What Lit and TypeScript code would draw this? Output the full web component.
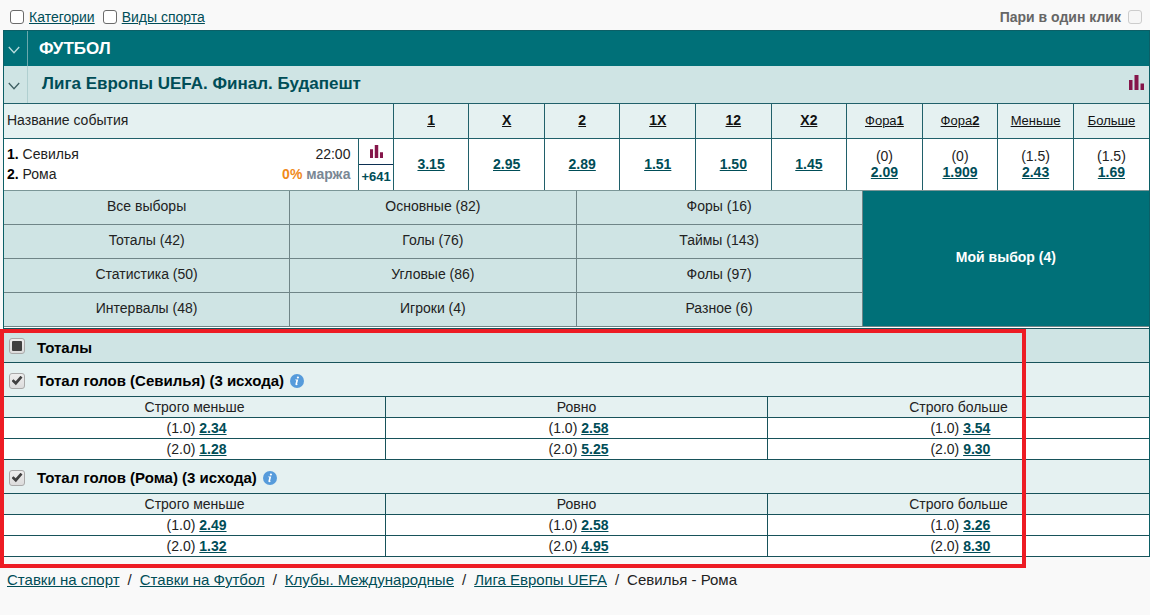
import { LitElement, html, css, svg } from "lit";
import { customElement, property } from "lit/decorators.js";
import { classMap } from "lit/directives/class-map.js";

interface Outcome {
  handicap: string;
  price: string;
}

interface Market {
  id: string;
  title: string;
  rows: [Outcome, Outcome, Outcome][];
}

const o = (handicap: string, price: string): Outcome => ({ handicap, price });

const COLUMNS = [
  { text: "", mark: "1" },
  { text: "", mark: "X" },
  { text: "", mark: "2" },
  { text: "", mark: "1X" },
  { text: "", mark: "12" },
  { text: "", mark: "X2" },
  { text: "Фора", mark: "1" },
  { text: "Фора", mark: "2" },
  { text: "Меньше", mark: "" },
  { text: "Больше", mark: "" },
];

const ODDS: Outcome[] = [
  o("", "3.15"),
  o("", "2.95"),
  o("", "2.89"),
  o("", "1.51"),
  o("", "1.50"),
  o("", "1.45"),
  o("(0)", "2.09"),
  o("(0)", "1.909"),
  o("(1.5)", "2.43"),
  o("(1.5)", "1.69"),
];

const GROUPS = [
  "Все выборы",
  "Основные (82)",
  "Форы (16)",
  "Тоталы (42)",
  "Голы (76)",
  "Таймы (143)",
  "Статистика (50)",
  "Угловые (86)",
  "Фолы (97)",
  "Интервалы (48)",
  "Игроки (4)",
  "Разное (6)",
];

const OUTCOMES = ["Строго меньше", "Ровно", "Строго больше"];

const MARKETS: Market[] = [
  {
    id: "sevilla",
    title: "Тотал голов (Севилья) (3 исхода)",
    rows: [
      [o("(1.0)", "2.34"), o("(1.0)", "2.58"), o("(1.0)", "3.54")],
      [o("(2.0)", "1.28"), o("(2.0)", "5.25"), o("(2.0)", "9.30")],
    ],
  },
  {
    id: "roma",
    title: "Тотал голов (Рома) (3 исхода)",
    rows: [
      [o("(1.0)", "2.49"), o("(1.0)", "2.58"), o("(1.0)", "3.26")],
      [o("(2.0)", "1.32"), o("(2.0)", "4.95"), o("(2.0)", "8.30")],
    ],
  },
];

const CRUMBS = ["Ставки на спорт", "Ставки на Футбол", "Клубы. Международные", "Лига Европы UEFA"];

const chevron = html`<svg width="12" height="8" viewBox="0 0 12 8" aria-hidden="true">
  ${svg`<path d="M0.8 1 L6 6.8 L11.2 1" fill="none" stroke="currentColor" stroke-width="1.3" />`}
</svg>`;

const bars = (size: number) => html`<svg width=${size} height=${size} viewBox="0 0 15 15" aria-hidden="true">
  ${svg`<path d="M0 5h3.5v10H0zM5.5 0h4v15h-4zM11.5 8.5H15V15h-3.5z" fill="#85164a" />`}
</svg>`;

const info = html`<svg width="14" height="14" viewBox="0 0 14 14" aria-hidden="true">
  ${svg`<circle cx="7" cy="7" r="7" fill="#569bdb" />
  <circle cx="7.9" cy="3.5" r="1.1" fill="#fff" />
  <path d="M5.3 5.6h2.9l-1.1 4.3q-.2.8.9.3l-.1.6q-2.9 1.2-2.5-.7l.9-3.6q0-.4-1.1-.4z" fill="#fff" />`}
</svg>`;

@customElement("market-table")
class MarketTable extends LitElement {
  @property({ attribute: false }) market!: Market;

  static styles = css`
    :host {
      display: block;
    }
    .title {
      display: flex;
      align-items: center;
      gap: 6px;
      height: 31px;
      padding: 2px 0 0 5px;
      background: #e5f1f1;
      color: #000;
    }
    h3 {
      margin: 0 0 0 6px;
      font-size: 15px;
      line-height: 20px;
    }
    .tick {
      appearance: none;
      display: grid;
      place-items: center;
      box-sizing: border-box;
      width: 16px;
      height: 16px;
      margin: 0;
      border: 1px solid #a9a9a9;
      border-radius: 3px;
      background: linear-gradient(#eee, #dcdcdc);
    }
    .tick:checked::before {
      content: "";
      width: 11px;
      height: 10px;
      background: #404040;
      clip-path: polygon(0 55%, 18% 38%, 38% 58%, 82% 3%, 100% 20%, 40% 98%);
    }
    .info {
      display: grid;
      padding: 0;
      border: 0;
      background: none;
    }
    table {
      width: 100%;
      table-layout: fixed;
      border-collapse: collapse;
      border-block: 1px solid #17525a;
    }
    th,
    td {
      height: 20px;
      padding: 0;
      text-align: center;
      font-weight: 400;
      line-height: 20px;
      border: 1px solid #17525a;
      background: #fff;
    }
    td {
      padding-left: 4px;
    }
    th {
      background: #e5f1f1;
    }
    th:first-child,
    td:first-child {
      border-left: 0;
    }
    th:last-child,
    td:last-child {
      border-right: 0;
    }
    .price {
      color: #004d57;
      font-weight: 700;
    }
  `;

  render() {
    const { id, title, rows } = this.market;
    return html`
      <div class="title">
        <input class="tick" type="checkbox" id=${id} checked />
        <h3><label for=${id}>${title}</label></h3>
        <button class="info" aria-label="Информация">${info}</button>
      </div>
      <table>
        <thead>
          <tr>
            ${OUTCOMES.map((name) => html`<th scope="col">${name}</th>`)}
          </tr>
        </thead>
        <tbody>
          ${rows.map(
            (row) => html`<tr>
              ${row.map((c) => html`<td>${c.handicap} <a class="price" href="#">${c.price}</a></td>`)}
            </tr>`
          )}
        </tbody>
      </table>
    `;
  }
}

@customElement("app-root")
class AppRoot extends LitElement {
  static styles = css`
    :host {
      display: block;
      min-height: 100vh;
      background: #f9f9f9;
      color: #222;
      font: 14px/20px "Liberation Sans", Arial, sans-serif;
    }
    a {
      color: #004d57;
    }
    .tools {
      display: flex;
      align-items: center;
      gap: 5px;
      height: 26px;
      padding: 4px 8px 0 10px;
    }
    .tools input {
      appearance: none;
      box-sizing: border-box;
      width: 14px;
      height: 14px;
      margin: 0;
      border: 1px solid #6b6b6b;
      border-radius: 3px;
      background: #fff;
    }
    .tools input:disabled {
      border-color: #ccc;
      background: #f6f6f6;
    }
    .tools a {
      margin-right: 3px;
    }
    .oneclick {
      display: flex;
      align-items: center;
      gap: 7px;
      margin-left: auto;
      color: #666;
      font-weight: 700;
    }
    .board {
      margin-left: 3px;
      border: 1px solid #0c5f66;
      border-bottom: 0;
      background: #fff;
    }
    .bar {
      display: flex;
      align-items: stretch;
      height: 35px;
      background: #007078;
      color: #fff;
    }
    .bar.league {
      height: 37px;
      background: #cfe4e4;
      color: #004d57;
    }
    .fold {
      display: grid;
      place-items: center;
      width: 24px;
      padding: 2px 3px 0 0;
      border: 0;
      border-right: 1px solid #6ba9ad;
      background: none;
      color: #b9dcdd;
    }
    .league .fold {
      border-color: #b0cfd0;
      color: #3f5f63;
    }
    h1,
    h2 {
      margin: 0;
      font-size: 17px;
      line-height: 35px;
      padding-left: 11px;
    }
    h2 {
      flex: 1;
      padding-left: 14px;
    }
    .stats {
      display: grid;
      place-items: center;
      padding: 0 5px;
      border: 0;
      background: none;
    }
    .league .stats {
      padding-bottom: 4px;
    }
    .odds {
      width: 100%;
      table-layout: fixed;
      border-collapse: collapse;
    }
    .odds col.name {
      width: 31%;
    }
    .odds col.more {
      width: 3%;
    }
    .odds th,
    .odds td {
      padding: 0 0 2px;
      border: 1px solid #20606a;
      border-bottom-color: #7b9697;
      text-align: center;
      line-height: 16px;
      font-weight: 400;
      background: #fff;
    }
    .odds th {
      height: 32px;
      background: #e5f1f1;
      border-bottom-color: #20606a;
    }
    .odds th:first-child,
    .odds td:first-child {
      border-left: 0;
      text-align: left;
      padding-left: 3px;
    }
    .odds th:last-child,
    .odds td:last-child {
      border-right: 0;
    }
    .odds td {
      height: 49px;
    }
    .odds td.more {
      padding: 0;
    }
    .odds th a {
      color: #111;
    }
    .odds .sort {
      font-size: 13px;
    }
    .odds .sort.main {
      font-size: 14px;
    }
    .odds td .price {
      display: inline-block;
      font-weight: 700;
    }
    .team {
      display: flex;
      justify-content: space-between;
      padding-right: 8px;
      line-height: 20px;
    }
    .team b {
      color: #000;
    }
    .margin {
      color: #7a8794;
      font-weight: 700;
    }
    .margin span {
      color: #f08a1c;
    }
    .side {
      display: grid;
      grid-template-rows: 1fr 1fr;
      height: 51px;
    }
    .side .stats {
      padding: 0;
      border-bottom: 1px solid #0c2f52;
    }
    .count {
      align-self: center;
      font-size: 13px;
      font-weight: 700;
      text-decoration: none;
    }
    .groups {
      display: grid;
      grid-template-columns: repeat(4, 1fr);
      grid-template-rows: repeat(4, 34px);
      margin-bottom: 1px;
    }
    .groups button {
      padding: 0 0 4px;
      border: 0;
      border-right: 1px solid #6f8587;
      border-bottom: 1px solid #6f8587;
      background: #cfe4e4;
      color: #222;
      font: inherit;
    }
    .groups button.active {
      grid-column: 4;
      grid-row: 1 / -1;
      border-right: 0;
      background: #007078;
      color: #fff;
      font-weight: 700;
    }
    .section {
      position: relative;
      border-top: 1px solid #17525a;
    }
    .total {
      display: flex;
      align-items: center;
      height: 33px;
      padding-left: 5px;
      border-bottom: 1px solid #17525a;
      background: #cfe4e4;
      color: #000;
    }
    .total h3 {
      margin: 4px 0 0 12px;
      font-size: 15px;
      line-height: 20px;
    }
    .total input {
      appearance: none;
      display: grid;
      place-items: center;
      box-sizing: border-box;
      width: 16px;
      height: 16px;
      margin: 0;
      border: 1px solid #a9a9a9;
      border-radius: 3px;
      background: linear-gradient(#eee, #dcdcdc);
    }
    .total input:indeterminate::before {
      content: "";
      width: 10px;
      height: 10px;
      border-radius: 1px;
      background: #404040;
    }
    .frame {
      position: absolute;
      inset: 0 auto -11px -4px;
      width: 89.6%;
      box-sizing: border-box;
      border: 4px solid #ed1c24;
      pointer-events: none;
    }
    .crumbs {
      display: flex;
      flex-wrap: wrap;
      gap: 8px;
      padding: 13px 7px;
      font-size: 15px;
    }
  `;

  render() {
    return html`
      <div class="tools">
        <input type="checkbox" id="categories" aria-label="Категории" />
        <a href="#">Категории</a>
        <input type="checkbox" id="sports" aria-label="Виды спорта" />
        <a href="#">Виды спорта</a>
        <label class="oneclick">Пари в один клик <input type="checkbox" disabled /></label>
      </div>

      <main class="board">
        <div class="bar">
          <button class="fold" aria-label="Свернуть">${chevron}</button>
          <h1>ФУТБОЛ</h1>
        </div>
        <div class="bar league">
          <button class="fold" aria-label="Свернуть">${chevron}</button>
          <h2>Лига Европы UEFA. Финал. Будапешт</h2>
          <button class="stats" aria-label="Статистика">${bars(15)}</button>
        </div>

        <table class="odds">
          <colgroup>
            <col class="name" />
            <col class="more" />
            ${COLUMNS.map(() => html`<col />`)}
          </colgroup>
          <thead>
            <tr>
              <th scope="col" colspan="2">Название события</th>
              ${COLUMNS.map(
                (c) => html`<th scope="col">
                  <a class=${classMap({ sort: true, main: !c.text })} href="#">${c.text}<b>${c.mark}</b></a>
                </th>`
              )}
            </tr>
          </thead>
          <tbody>
            <tr>
              <td>
                <div class="team"><span><b>1.</b> Севилья</span><span>22:00</span></div>
                <div class="team">
                  <span><b>2.</b> Рома</span><span class="margin"><span>0%</span> маржа</span>
                </div>
              </td>
              <td class="more">
                <div class="side">
                  <button class="stats" aria-label="Статистика">${bars(13)}</button>
                  <a class="count" href="#">+641</a>
                </div>
              </td>
              ${ODDS.map(
                (c) => html`<td>
                  ${c.handicap ? html`<div>${c.handicap}</div>` : ""}<a class="price" href="#">${c.price}</a>
                </td>`
              )}
            </tr>
          </tbody>
        </table>

        <nav class="groups">
          <button class="active">Мой выбор (4)</button>
          ${GROUPS.map((g) => html`<button>${g}</button>`)}
        </nav>

        <section class="section">
          <div class="total">
            <input type="checkbox" id="totals" .indeterminate=${true} />
            <h3><label for="totals">Тоталы</label></h3>
          </div>
          ${MARKETS.map((m) => html`<market-table .market=${m}></market-table>`)}
          <div class="frame"></div>
        </section>
      </main>

      <nav class="crumbs">
        ${CRUMBS.map((c) => html`<a href="#">${c}</a><span>/</span>`)}
        <span>Севилья - Рома</span>
      </nav>
    `;
  }
}
